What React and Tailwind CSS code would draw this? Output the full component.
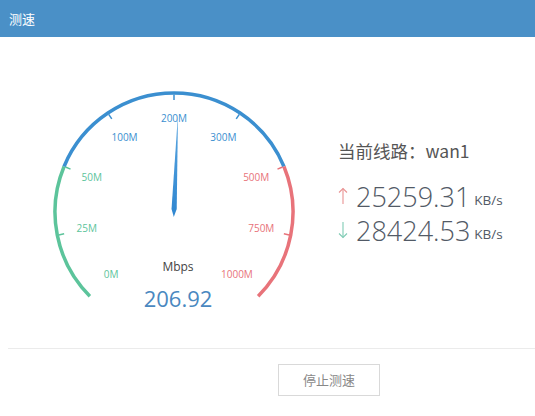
import React from "react";

const CX = 150;
const CY = 175;
const R = 119;

function pt(deg, r) {
  const a = (deg * Math.PI) / 180;
  return [CX + r * Math.cos(a), CY - r * Math.sin(a)];
}

function arc(a1, a2, color) {
  const [x1, y1] = pt(a1, R);
  const [x2, y2] = pt(a2, R);
  return (
    <path
      d={`M ${x1} ${y1} A ${R} ${R} 0 0 1 ${x2} ${y2}`}
      fill="none"
      stroke={color}
      strokeWidth="3.5"
    />
  );
}

const GREEN = "#5cc49b";
const BLUE = "#3b8fd0";
const RED = "#e8737a";

const labels = [
  { t: "0M", c: GREEN },
  { t: "25M", c: GREEN },
  { t: "50M", c: GREEN },
  { t: "100M", c: BLUE },
  { t: "200M", c: BLUE },
  { t: "300M", c: BLUE },
  { t: "500M", c: RED },
  { t: "750M", c: RED },
  { t: "1000M", c: RED },
];

function Gauge() {
  const value = 206.92;
  const needleAngle = 90 - 33.75 * ((value - 200) / 100);
  const tip = pt(needleAngle, 98);
  const l = pt(needleAngle + 90, 2.6);
  const rr = pt(needleAngle - 90, 2.6);
  const a = (needleAngle * Math.PI) / 180;
  const ox = Math.cos(a) * 3;
  const oy = -Math.sin(a) * 3;
  const tail = pt(needleAngle + 180, 5);
  return (
    <svg width="300" height="282" viewBox="0 0 300 282" className="block shrink-0">
      <defs>
        <linearGradient id="ng" x1="0" y1="1" x2="0" y2="0">
          <stop offset="0" stopColor="#2f86d0" />
          <stop offset="1" stopColor="#5aa6e0" />
        </linearGradient>
      </defs>
      {arc(225, 157.5, GREEN)}
      {arc(157.5, 22.5, BLUE)}
      {arc(22.5, -45, RED)}
      {labels.map((lb, i) => {
        const deg = 225 - 33.75 * i;
        const ticks = [];
        if (i > 0 && i < 8) {
          const [x1, y1] = pt(deg, R - 1.5);
          const [x2, y2] = pt(deg, R - 7);
          ticks.push(
            <line key="t" x1={x1} y1={y1} x2={x2} y2={y2} stroke={lb.c} strokeWidth="1.5" />
          );
        }
        const rad = i === 4 ? 93 : 89;
        const [tx, ty] = pt(deg, rad);
        return (
          <g key={lb.t}>
            {ticks}
            <text
              x={tx}
              y={ty}
              fill={lb.c}
              fontSize="10"
              textAnchor="middle"
              dominantBaseline="middle"
              fontFamily="'Open Sans', 'Liberation Sans', sans-serif"
            >
              {lb.t}
            </text>
          </g>
        );
      })}
      <polygon
        points={`${tip[0]},${tip[1]} ${l[0] + ox},${l[1] + oy} ${tail[0]},${tail[1]} ${rr[0] + ox},${rr[1] + oy}`}
        fill="url(#ng)"
      />
      <text
        x="154"
        y="231"
        fill="#444"
        fontSize="12"
        textAnchor="middle"
        dominantBaseline="middle"
        fontFamily="'Open Sans', 'Liberation Sans', sans-serif"
      >
        Mbps
      </text>
      <text
        x="154"
        y="264"
        fill="#4a88c0"
        fontSize="22"
        textAnchor="middle"
        dominantBaseline="middle"
        fontFamily="'Open Sans', 'Liberation Sans', sans-serif"
      >
        206.92
      </text>
    </svg>
  );
}

function Arrow({ up, color }) {
  return (
    <svg width="10" height="18" viewBox="0 0 10 18" className="block">
      {up ? (
        <g stroke={color} strokeWidth="1.1" fill="none">
          <line x1="5" y1="1.5" x2="5" y2="17" />
          <polyline points="1,5.5 5,1.5 9,5.5" />
        </g>
      ) : (
        <g stroke={color} strokeWidth="1.1" fill="none">
          <line x1="5" y1="1" x2="5" y2="16.5" />
          <polyline points="1,12.5 5,16.5 9,12.5" />
        </g>
      )}
    </svg>
  );
}

export default function App() {
  return (
    <div
      className="w-[535px] h-[416px] bg-white overflow-hidden"
      style={{ fontFamily: "'Open Sans', 'Noto Sans CJK SC', sans-serif" }}
    >
      <div className="h-[37px] bg-[#4a90c7] flex items-center px-[9px] text-white text-[13px] font-['Noto_Sans_CJK_SC',sans-serif]">
        测速
      </div>
      <div className="flex">
        <div className="ml-[24px]">
          <Gauge />
        </div>
        <div className="ml-[14px] pt-[101px] flex flex-col">
          <div className="text-[17.5px] leading-[26px] text-[#555] font-['Noto_Sans_CJK_SC',sans-serif]">
            当前线路：wan1
          </div>
          <div className="mt-[15px] flex items-center h-[34px]">
            <Arrow up color="#e99393" />
            <span className="ml-[8px] text-[27px] font-light text-[#525a66] leading-none">
              25259.31
            </span>
            <span className="ml-[4px] mt-[8px] text-[13.5px] text-[#525a66]">KB/s</span>
          </div>
          <div className="flex items-center h-[34px]">
            <Arrow color="#7fcbb4" />
            <span className="ml-[8px] text-[27px] font-light text-[#525a66] leading-none">
              28424.53
            </span>
            <span className="ml-[4px] mt-[8px] text-[13.5px] text-[#525a66]">KB/s</span>
          </div>
        </div>
      </div>
      <div className="ml-[8px] mt-[29px] border-t border-[#ebebeb]" />
      <div className="flex pl-[278px] pt-[15px]">
        <button className="w-[102px] h-[32px] border border-[#d9d9d9] bg-white text-[13px] text-[#888] font-['Noto_Sans_CJK_SC',sans-serif]">
          停止测速
        </button>
      </div>
    </div>
  );
}
